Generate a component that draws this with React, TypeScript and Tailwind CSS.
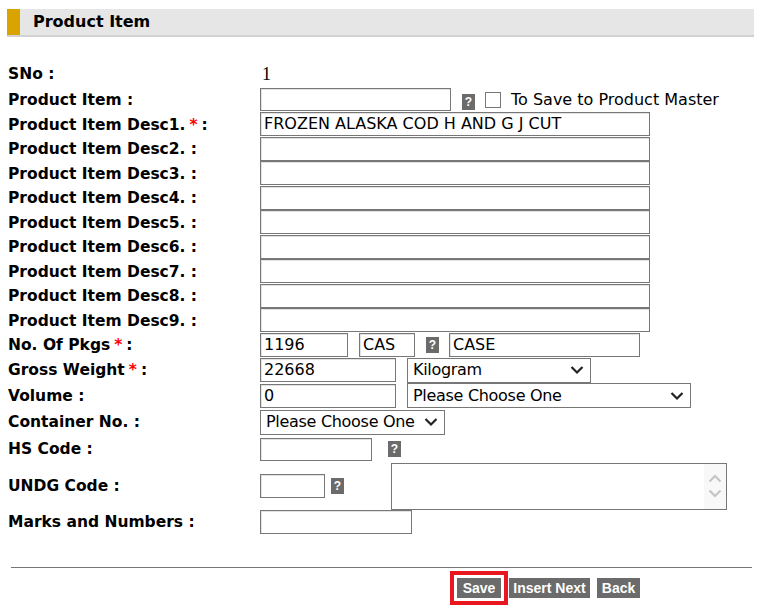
import type { ReactNode } from "react";

const labelFont = { fontFamily: '"DejaVu Sans", Verdana, sans-serif' };
const fieldFont = { fontFamily: '"DejaVu Sans", Tahoma, sans-serif' };

const Help = ({ className = "" }: { className?: string }) => (
  <span
    className={`inline-flex items-center justify-center w-[13px] h-[16px] bg-[#6b6b6b] text-white text-[12px] font-bold leading-none ${className}`}
    style={{ fontFamily: '"Liberation Sans", Arial, sans-serif' }}
  >
    ?
  </span>
);

const Field = ({ w, value = "", h = 24 }: { w: number; value?: string; h?: number }) => (
  <div
    className="flex items-center border border-[#777] shadow-[inset_1px_1px_0_#e2e2e2] bg-white px-[3px] text-[16px] text-black whitespace-nowrap overflow-hidden"
    style={{ ...fieldFont, width: w, height: h }}
  >
    {value}
  </div>
);

const Select = ({ w, value, h = 25 }: { w: number; value: string; h?: number }) => (
  <div
    className="flex items-center justify-between border border-[#777] bg-white pl-[5px] pr-[6px] text-[16px] text-black whitespace-nowrap"
    style={{ ...fieldFont, width: w, height: h }}
  >
    <span className="tracking-[-0.3px]">{value}</span>
    <svg width="14" height="10" viewBox="0 0 14 10" fill="none" className="ml-[4px] shrink-0">
      <path d="M1.5 2 L7 7.5 L12.5 2" stroke="#222" strokeWidth="2.2" />
    </svg>
  </div>
);

const Star = () => <span className="text-[#ff0000] mx-[4px]">*</span>;

const Row = ({ label, h, children }: { label: ReactNode; h: number; children?: ReactNode }) => (
  <div className="flex items-center" style={{ height: h }}>
    <div className="w-[252px] shrink-0 pt-[2px] text-[15.5px] font-bold text-black" style={labelFont}>
      {label}
    </div>
    <div className="flex items-center">{children}</div>
  </div>
);

const buttons = [
  { text: "Save", w: 44 },
  { text: "Insert Next", w: 81 },
  { text: "Back", w: 43 },
];

export default function App() {
  const descs = [2, 3, 4, 5, 6, 7, 8, 9];
  return (
    <div className="w-[761px] h-[615px] bg-white relative overflow-hidden">
      <div className="mx-[7px] mt-[9px] h-[28px] flex bg-[#e6e6e6] border-b-2 border-[#d2d2d2]">
        <div className="w-[13px] bg-[#d9a300]" />
        <div className="ml-[13px] text-[16px] font-bold text-black leading-[25px]" style={labelFont}>
          Product Item
        </div>
      </div>

      <div className="pl-[8px] mt-[24px]">
        <Row label="SNo :" h={26}>
          <span className="pl-[2px] text-[18px] text-black" style={{ fontFamily: '"Liberation Serif", serif' }}>
            1
          </span>
        </Row>
        <Row label="Product Item :" h={25}>
          <Field w={191} h={23} />
          <Help className="ml-[11px] mt-[4px]" />
          <span className="ml-[10px] w-[16px] h-[16px] border border-[#777] bg-white" />
          <span className="ml-[10px] text-[16px] text-black" style={fieldFont}>
            To Save to Product Master
          </span>
        </Row>
        <Row label={<>Product Item Desc1.<Star />:</>} h={24.5}>
          <Field w={390} value="FROZEN ALASKA COD H AND G J CUT" />
        </Row>
        {descs.map((n) => (
          <Row key={n} label={`Product Item Desc${n}. :`} h={24.5}>
            <Field w={390} />
          </Row>
        ))}
        <Row label={<>No. Of Pkgs<Star />:</>} h={25}>
          <Field w={88} value="1196" />
          <div className="ml-[11px]">
            <Field w={56} value="CAS" />
          </div>
          <Help className="ml-[11px]" />
          <div className="ml-[10px]">
            <Field w={191} value="CASE" />
          </div>
        </Row>
        <Row label={<>Gross Weight<Star />:</>} h={25}>
          <Field w={136} value="22668" />
          <div className="ml-[11px]">
            <Select w={184} value="Kilogram" />
          </div>
        </Row>
        <Row label="Volume :" h={26}>
          <Field w={136} value="0" />
          <div className="ml-[11px]">
            <Select w={284} value="Please Choose One" />
          </div>
        </Row>
        <Row label="Container No. :" h={27}>
          <Select w={185} value="Please Choose One" />
        </Row>
        <Row label="HS Code :" h={27}>
          <Field w={112} h={23} />
          <Help className="ml-[16px]" />
        </Row>
        <Row label="UNDG Code :" h={47}>
          <Field w={65} />
          <Help className="ml-[6px]" />
          <div className="ml-[47px] w-[336px] h-[47px] border border-[#777] bg-white flex justify-end">
            <div className="w-[22px] h-full bg-[#f8f8f8] flex flex-col items-center justify-center gap-[6px]">
              <svg width="14" height="9" viewBox="0 0 14 9" fill="none">
                <path d="M1.5 7.5 L7 2 L12.5 7.5" stroke="#c4c4c4" strokeWidth="2.2" />
              </svg>
              <svg width="14" height="9" viewBox="0 0 14 9" fill="none">
                <path d="M1.5 1.5 L7 7 L12.5 1.5" stroke="#c4c4c4" strokeWidth="2.2" />
              </svg>
            </div>
          </div>
        </Row>
        <Row label="Marks and Numbers :" h={24}>
          <Field w={152} />
        </Row>
      </div>

      <div className="ml-[11px] mt-[33px] mr-[9px] border-t border-[#777]" />

      <div className="flex pl-[457px] mt-[10px] gap-[7px]">
        {buttons.map((b) => (
          <button
            key={b.text}
            className={`h-[20px] shrink-0 bg-[#6b6b6b] text-white text-[14px] font-bold leading-none whitespace-nowrap ${
              b.text === "Save" ? "mr-[1px] outline-4 outline-[#e8161f] outline-offset-3" : ""
            }`}
            style={{ fontFamily: '"Liberation Sans", Arial, sans-serif', width: b.w }}
          >
            {b.text}
          </button>
        ))}
      </div>
    </div>
  );
}
